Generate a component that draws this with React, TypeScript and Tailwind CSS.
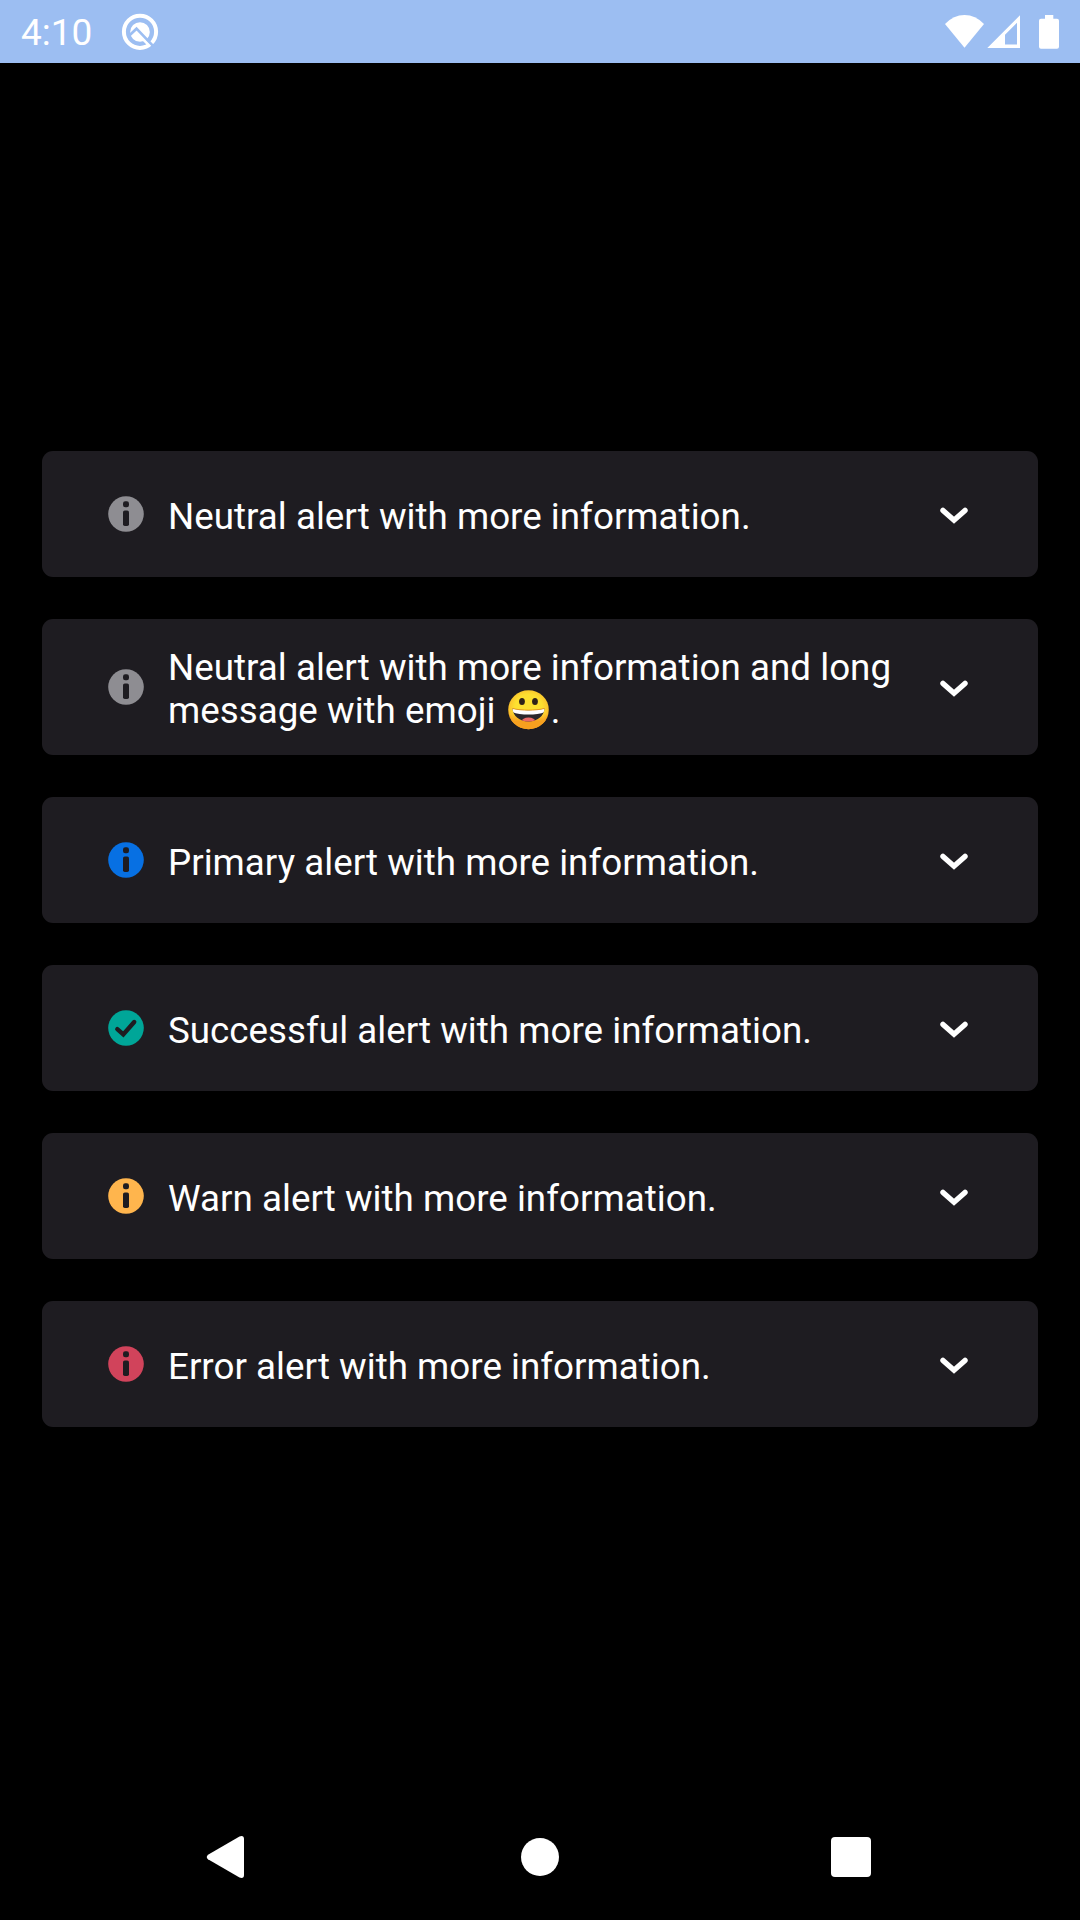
import React from "react";

type Kind = "info" | "check";

interface Alert {
  id: string;
  kind: Kind;
  color: string;
  message: React.ReactNode;
}

function GrinningFace() {
  return (
    <svg
      className="ml-[3px] mr-[2px] inline-block h-[40px] w-[41px] align-[-7px]"
      viewBox="0 0 41 40"
      role="img"
      aria-label="grinning face"
    >
      <defs>
        <radialGradient id="face" cx="0.5" cy="0.45" r="0.56">
          <stop offset="0.6" stopColor="#fde030" />
          <stop offset="0.85" stopColor="#fbc52c" />
          <stop offset="1" stopColor="#f08f12" />
        </radialGradient>
        <linearGradient id="chin" x1="0" y1="0" x2="0" y2="1">
          <stop offset="0.6" stopColor="#f7a81f" stopOpacity="0" />
          <stop offset="0.8" stopColor="#f7a01f" />
        </linearGradient>
        <clipPath id="mouth">
          <path d="M4.500 18.500c9 2.200 23 2.200 32 0-.6 7.500-7 13-16 13s-15.400-5.500-16-13z" />
        </clipPath>
      </defs>
      <ellipse cx="20.500" cy="19.700" rx="20.300" ry="19.500" fill="url(#face)" />
      <ellipse cx="20.500" cy="19.700" rx="20.300" ry="19.500" fill="url(#chin)" />
      <ellipse cx="14" cy="11.600" rx="2.900" ry="3.500" fill="#2f2218" />
      <ellipse cx="27" cy="11.600" rx="2.900" ry="3.500" fill="#2f2218" />
      <g clipPath="url(#mouth)">
        <rect width="41" height="41" fill="#2b282b" />
        <path d="M3 17c9 3 26 3 35 0v4.500c-9 4-26 4-35 0z" fill="#fff" />
        <ellipse cx="20.500" cy="31.300" rx="7" ry="3.700" fill="#ec6a66" />
      </g>
      <path d="M4.500 18.500c9 2.200 23 2.200 32 0" fill="none" stroke="#eb8f00" strokeWidth="0.800" />
    </svg>
  );
}

const alerts: Alert[] = [
  { id: "neutral", kind: "info", color: "text-[#8e8d92]", message: "Neutral alert with more information." },
  {
    id: "neutral-long",
    kind: "info",
    color: "text-[#8e8d92]",
    message: (
      <>
        Neutral alert with more information and long message with emoji <GrinningFace />.
      </>
    ),
  },
  { id: "primary", kind: "info", color: "text-[#0770e3]", message: "Primary alert with more information." },
  { id: "success", kind: "check", color: "text-[#00a698]", message: "Successful alert with more information." },
  { id: "warn", kind: "info", color: "text-[#ffb54d]", message: "Warn alert with more information." },
  { id: "error", kind: "info", color: "text-[#d1435b]", message: "Error alert with more information." },
];

function AlertIcon({ kind }: { kind: Kind }) {
  return (
    <svg className="h-9 w-9" viewBox="0 0 36 36" fill="none">
      <circle cx="18" cy="18" r="17.800" fill="currentColor" />
      {kind === "info" ? (
        <g fill="#1e1c21">
          <rect x="15" y="5.300" width="6" height="6" rx="2.200" />
          <rect x="15" y="14.500" width="6" height="15.600" rx="1.800" />
        </g>
      ) : (
        <path d="M9.300 19.200l6 5.300L26.200 12" stroke="#1e1c21" strokeWidth="4.400" strokeLinecap="round" />
      )}
    </svg>
  );
}

function Chevron() {
  return (
    <svg className="h-[42px] w-[42px]" viewBox="0 0 42 42" fill="none">
      <path d="M10 17.400l11 9.800 11-9.800" stroke="#fff" strokeWidth="5.400" strokeLinecap="round" />
    </svg>
  );
}

function StatusBar() {
  return (
    <header className="flex h-[63px] items-center bg-[#9cbef2] pl-[21px] pr-[21px] text-white">
      <span className="w-[100px] pt-[2px] text-[37px] leading-[43px]">4:10</span>
      <svg className="h-[38px] w-[38px]" viewBox="121 12.500 38 38" fill="none">
        <circle cx="140" cy="31.300" r="16.100" stroke="#fff" strokeWidth="4" />
        <circle cx="140" cy="31.500" r="9.800" fill="#fff" />
        <path d="M144 39.500L149.500 45" stroke="#fff" strokeWidth="3" />
        <path d="M128 36.300L136.500 28.200L154 46.300" stroke="#9cbef2" strokeWidth="2.600" />
      </svg>
      <svg className="ml-auto h-[38px] w-[115px]" viewBox="944 12 115 38" fill="#fff">
        <path d="M945 23Q953.500 14 964.500 14T984 23L964.500 46.800z" />
        <path fillRule="evenodd" d="M987.300 47L1020 14.300V47zM1005 43.500h12V21.800L1005 33.800z" />
        <path d="M1045 14h8.300v3.800h3.700a2 2 0 0 1 2 2v26a2 2 0 0 1-2 2h-16a2 2 0 0 1-2-2v-26a2 2 0 0 1 2-2h4z" />
      </svg>
    </header>
  );
}

function AlertCard({ alert }: { alert: Alert }) {
  const long = alert.id === "neutral-long";
  return (
    <article
      className={`flex items-center rounded-[11px] bg-[#1e1c21] pl-[66px] pr-[63px] ${long ? "h-[136px]" : "h-[126px]"}`}
    >
      <span className={`shrink-0 ${alert.color}`}>
        <AlertIcon kind={alert.kind} />
      </span>
      <p className="ml-6 w-[735px] shrink-0 pt-1 text-[36.75px] leading-[43px] tracking-[0.015px] text-white">
        {alert.message}
      </p>
      <button className="ml-auto shrink-0" aria-label="Show more">
        <Chevron />
      </button>
    </article>
  );
}

function NavigationBar() {
  return (
    <nav className="flex h-[126px] items-center justify-between bg-black pl-[206px] pr-[209px]">
      <svg className="h-[44px] w-[39px]" viewBox="0 0 39 44" fill="#fff">
        <path d="M2 19.700L33.500 1.400Q38 0 38 4V40Q38 44 33.500 42.600L2 24.300Q-.5 22 2 19.700z" />
      </svg>
      <span className="ml-1 h-[38px] w-[38px] rounded-full bg-white" />
      <span className="h-10 w-10 rounded-[4px] bg-white" />
    </nav>
  );
}

export default function App() {
  return (
    <div className="flex h-[1920px] w-[1080px] flex-col bg-black font-['Roboto',sans-serif]">
      <StatusBar />
      <main className="flex flex-1 flex-col gap-[42px] px-[42px] pt-[388px]">
        {alerts.map((alert) => (
          <AlertCard key={alert.id} alert={alert} />
        ))}
      </main>
      <NavigationBar />
    </div>
  );
}
